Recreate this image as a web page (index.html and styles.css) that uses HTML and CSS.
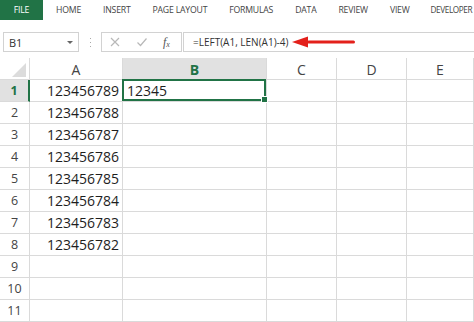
FILE: index.html
```html
<!DOCTYPE html>
<html>
<head>
<meta charset="utf-8">
<link rel="stylesheet" href="styles.css">
</head>
<body>
<div class="app">
  <div class="tabs">
    <div class="tab file">FILE</div>
    <div class="tab first">HOME</div>
    <div class="tab">INSERT</div>
    <div class="tab">PAGE LAYOUT</div>
    <div class="tab">FORMULAS</div>
    <div class="tab">DATA</div>
    <div class="tab">REVIEW</div>
    <div class="tab">VIEW</div>
    <div class="tab last">DEVELOPER</div>
  </div>

  <div class="fbar">
    <div class="namebox">
      <span class="name">B1</span>
      <span class="caret"></span>
    </div>
    <div class="dots"><i></i><i></i><i></i></div>
    <div class="iconbox">
      <svg class="ico" width="12" height="12" viewBox="0 0 12 12"><path d="M2 2 L10 10 M10 2 L2 10" stroke="#b8b8b8" stroke-width="1.2" fill="none"/></svg>
      <svg class="ico" width="12" height="12" viewBox="0 0 12 12"><path d="M1.5 6.5 L4.5 9.5 L10.5 2.5" stroke="#b8b8b8" stroke-width="1.2" fill="none"/></svg>
      <span class="fx">f<sub>x</sub></span>
    </div>
    <div class="formula">
      <span class="ftext">=LEFT(A1, LEN(A1)-4)</span>
      <svg class="arrow" width="66" height="14" viewBox="0 0 66 14"><polygon points="0,7 16,1.5 16,12.5" fill="#e3201b"/><rect x="15" y="5.5" width="48" height="3" rx="1.5" fill="#e3201b"/></svg>
    </div>
  </div>

  <div class="sheet">
    <div class="c corner"><svg width="29" height="21" viewBox="0 0 29 21"><polygon points="26,5 26,19 12,19" fill="#dcdcdc"/></svg></div>
    <div class="c ch">A</div>
    <div class="c ch sel">B</div>
    <div class="c ch">C</div>
    <div class="c ch">D</div>
    <div class="c ch">E</div>

    <div class="c rh sel">1</div>
    <div class="c num">123456789</div>
    <div class="c txt active">12345<span class="frame"><span class="handle"></span></span></div>
    <div class="c"></div><div class="c"></div><div class="c"></div>

    <div class="c rh">2</div>
    <div class="c num">123456788</div>
    <div class="c"></div><div class="c"></div><div class="c"></div><div class="c"></div>

    <div class="c rh">3</div>
    <div class="c num">123456787</div>
    <div class="c"></div><div class="c"></div><div class="c"></div><div class="c"></div>

    <div class="c rh">4</div>
    <div class="c num">123456786</div>
    <div class="c"></div><div class="c"></div><div class="c"></div><div class="c"></div>

    <div class="c rh">5</div>
    <div class="c num">123456785</div>
    <div class="c"></div><div class="c"></div><div class="c"></div><div class="c"></div>

    <div class="c rh">6</div>
    <div class="c num">123456784</div>
    <div class="c"></div><div class="c"></div><div class="c"></div><div class="c"></div>

    <div class="c rh">7</div>
    <div class="c num">123456783</div>
    <div class="c"></div><div class="c"></div><div class="c"></div><div class="c"></div>

    <div class="c rh">8</div>
    <div class="c num">123456782</div>
    <div class="c"></div><div class="c"></div><div class="c"></div><div class="c"></div>

    <div class="c rh">9</div>
    <div class="c"></div><div class="c"></div><div class="c"></div><div class="c"></div><div class="c"></div>

    <div class="c rh">10</div>
    <div class="c"></div><div class="c"></div><div class="c"></div><div class="c"></div><div class="c"></div>

    <div class="c rh">11</div>
    <div class="c"></div><div class="c"></div><div class="c"></div><div class="c"></div><div class="c"></div>
  </div>
</div>
</body>
</html>
```

FILE: styles.css
```css
html, body {
  margin: 0;
  padding: 0;
  background: #ffffff;
}
body {
  width: 474px;
  height: 322px;
  overflow: hidden;
  font-family: "Open Sans", "Liberation Sans", sans-serif;
}
.app {
  display: flex;
  flex-direction: column;
}

/* ribbon tabs */
.tabs {
  display: flex;
  height: 20px;
  align-items: center;
  white-space: nowrap;
  overflow: hidden;
}
.tab {
  flex-shrink: 0;
  font-size: 8.7px;
  color: #444;
  padding: 0 11px;
  line-height: 20px;
  letter-spacing: -0.2px;
}
.tab.file {
  background: #217346;
  color: #fff;
  width: 43px;
  box-sizing: border-box;
  padding: 0;
  text-align: center;
}
.tab.first {
  margin-left: 2px;
}
.tab.last {
  padding-left: 10px;
  padding-right: 0;
  font-size: 8.2px;
  letter-spacing: -0.4px;
}

/* formula bar */
.fbar {
  display: flex;
  margin-top: 12px;
  height: 20px;
  align-items: stretch;
}
.namebox {
  flex-shrink: 0;
  margin-left: 3px;
  width: 76px;
  box-sizing: border-box;
  border: 1px solid #d2d2d2;
  display: flex;
  align-items: center;
  justify-content: space-between;
  padding: 0 5px 0 5px;
}
.name {
  font-size: 11px;
  color: #333;
}
.caret {
  width: 0;
  height: 0;
  border-left: 3px solid transparent;
  border-right: 3px solid transparent;
  border-top: 3px solid #666;
}
.dots {
  flex-shrink: 0;
  width: 22px;
  display: flex;
  flex-direction: column;
  align-items: center;
  justify-content: center;
  gap: 3px;
}
.dots i {
  display: block;
  width: 1px;
  height: 1px;
  background: #a9a9a9;
}
.iconbox {
  flex-shrink: 0;
  width: 81px;
  box-sizing: border-box;
  border: 1px solid #d2d2d2;
  display: flex;
  align-items: center;
  padding-left: 7px;
  gap: 15px;
}
.fx {
  font-family: "Liberation Serif", serif;
  font-style: italic;
  font-size: 12px;
  color: #555;
  line-height: 1;
}
.fx sub {
  font-size: 8px;
  vertical-align: -1px;
}
.formula {
  flex: 1;
  margin-left: 1px;
  border: 1px solid #d2d2d2;
  border-right: none;
  position: relative;
  display: flex;
  align-items: center;
  padding-left: 9px;
}
.ftext {
  font-size: 10px;
  color: #333;
  white-space: nowrap;
}
.arrow {
  position: absolute;
  left: 108px;
  top: 2px;
}

/* sheet */
.sheet {
  margin-top: 6px;
  display: grid;
  grid-template-columns: 30px 93px 144px 70px 70px 1fr;
  grid-auto-rows: 22px;
}
.c {
  box-sizing: border-box;
  border-right: 1px solid #dadada;
  border-bottom: 1px solid #dadada;
  font-size: 14px;
  color: #1e1e1e;
  display: flex;
  align-items: center;
  white-space: nowrap;
}
.corner {
  align-items: stretch;
}
.corner svg {
  display: block;
}
.ch {
  justify-content: center;
  color: #444;
  font-size: 14px;
  padding-top: 2px;
}
.ch.sel {
  background: #e1e1e1;
  color: #217346;
  font-weight: bold;
}
.rh {
  justify-content: center;
  color: #444;
  font-size: 12.5px;
}
.rh.sel {
  background: #e1e1e1;
  color: #217346;
  font-weight: bold;
  border-right: 2px solid #217346;
}
.num {
  justify-content: flex-end;
  padding-right: 3px;
}
.txt {
  padding-left: 4px;
}
.active {
  position: relative;
}
.frame {
  position: absolute;
  left: -1px;
  top: -1px;
  right: 0;
  bottom: 0;
  border: 2px solid #217346;
}
.handle {
  position: absolute;
  right: -4px;
  bottom: -4px;
  width: 5px;
  height: 5px;
  background: #217346;
  border: 1px solid #fff;
}
```
